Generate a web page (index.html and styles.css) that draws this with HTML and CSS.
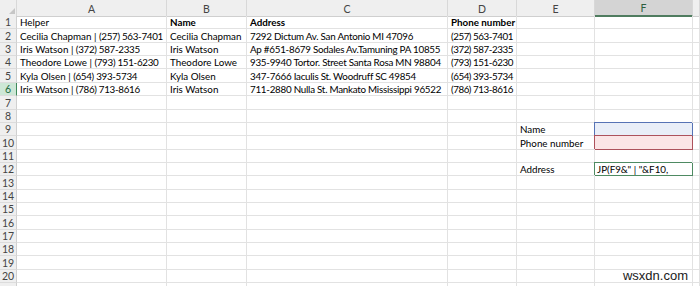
FILE: index.html
```html
<!DOCTYPE html>
<html>
<head>
<meta charset="utf-8">
<link rel="stylesheet" href="styles.css">
</head>
<body>
<div class="sheet">
  <div class="row head">
    <div class="corner"><svg width="17" height="16" viewBox="0 0 17 16"><polygon points="15,8 15,14 9,14" fill="#c6c6c6"/></svg></div>
    <div class="ch">A</div><div class="ch">B</div><div class="ch">C</div><div class="ch">D</div><div class="ch">E</div><div class="ch sel">F</div><div class="ch"></div>
  </div>
  <div class="row"><div class="rh">1</div><div class="c">Helper</div><div class="c b">Name</div><div class="c b">Address</div><div class="c b">Phone number</div><div class="c"></div><div class="c"></div><div class="c"></div></div>
  <div class="row"><div class="rh">2</div><div class="c">Cecilia Chapman | <span class="ph">(257) 563-7401</span></div><div class="c">Cecilia Chapman</div><div class="c ad">7292 Dictum Av. San Antonio MI 47096</div><div class="c"><span class="ph pd">(257) 563-7401</span></div><div class="c"></div><div class="c"></div><div class="c"></div></div>
  <div class="row"><div class="rh">3</div><div class="c">Iris Watson | <span class="ph">(372) 587-2335</span></div><div class="c">Iris Watson</div><div class="c ad">Ap #651-8679 Sodales Av.Tamuning PA 10855</div><div class="c"><span class="ph pd">(372) 587-2335</span></div><div class="c"></div><div class="c"></div><div class="c"></div></div>
  <div class="row"><div class="rh">4</div><div class="c">Theodore Lowe | <span class="ph">(793) 151-6230</span></div><div class="c">Theodore Lowe</div><div class="c ad">935-9940 Tortor. Street Santa Rosa MN 98804</div><div class="c"><span class="ph pd">(793) 151-6230</span></div><div class="c"></div><div class="c"></div><div class="c"></div></div>
  <div class="row"><div class="rh">5</div><div class="c">Kyla Olsen | <span class="ph">(654) 393-5734</span></div><div class="c">Kyla Olsen</div><div class="c ad">347-7666 Iaculis St. Woodruff SC 49854</div><div class="c"><span class="ph pd">(654) 393-5734</span></div><div class="c"></div><div class="c"></div><div class="c"></div></div>
  <div class="row"><div class="rh on">6</div><div class="c">Iris Watson | <span class="ph">(786) 713-8616</span></div><div class="c">Iris Watson</div><div class="c ad">711-2880 Nulla St. Mankato Mississippi 96522</div><div class="c"><span class="ph pd">(786) 713-8616</span></div><div class="c"></div><div class="c"></div><div class="c"></div></div>
  <div class="row"><div class="rh">7</div><div class="c"></div><div class="c"></div><div class="c"></div><div class="c"></div><div class="c"></div><div class="c"></div><div class="c"></div></div>
  <div class="row"><div class="rh">8</div><div class="c"></div><div class="c"></div><div class="c"></div><div class="c"></div><div class="c"></div><div class="c"></div><div class="c"></div></div>
  <div class="row"><div class="rh">9</div><div class="c"></div><div class="c"></div><div class="c"></div><div class="c"></div><div class="c">Name</div><div class="c fb"></div><div class="c"></div></div>
  <div class="row"><div class="rh">10</div><div class="c"></div><div class="c"></div><div class="c"></div><div class="c"></div><div class="c">Phone number</div><div class="c fr"></div><div class="c"></div></div>
  <div class="row"><div class="rh">11</div><div class="c"></div><div class="c"></div><div class="c"></div><div class="c"></div><div class="c"></div><div class="c"></div><div class="c"></div></div>
  <div class="row"><div class="rh">12</div><div class="c"></div><div class="c"></div><div class="c"></div><div class="c"></div><div class="c">Address</div><div class="c fg">JP(F9&amp;" | "&amp;F10,</div><div class="c"></div></div>
  <div class="row"><div class="rh">13</div><div class="c"></div><div class="c"></div><div class="c"></div><div class="c"></div><div class="c"></div><div class="c"></div><div class="c"></div></div>
  <div class="row"><div class="rh">14</div><div class="c"></div><div class="c"></div><div class="c"></div><div class="c"></div><div class="c"></div><div class="c"></div><div class="c"></div></div>
  <div class="row"><div class="rh">15</div><div class="c"></div><div class="c"></div><div class="c"></div><div class="c"></div><div class="c"></div><div class="c"></div><div class="c"></div></div>
  <div class="row"><div class="rh">16</div><div class="c"></div><div class="c"></div><div class="c"></div><div class="c"></div><div class="c"></div><div class="c"></div><div class="c"></div></div>
  <div class="row"><div class="rh">17</div><div class="c"></div><div class="c"></div><div class="c"></div><div class="c"></div><div class="c"></div><div class="c"></div><div class="c"></div></div>
  <div class="row"><div class="rh">18</div><div class="c"></div><div class="c"></div><div class="c"></div><div class="c"></div><div class="c"></div><div class="c"></div><div class="c"></div></div>
  <div class="row"><div class="rh">19</div><div class="c"></div><div class="c"></div><div class="c"></div><div class="c"></div><div class="c"></div><div class="c"></div><div class="c"></div></div>
  <div class="row"><div class="rh">20</div><div class="c"></div><div class="c"></div><div class="c"></div><div class="c"></div><div class="c"></div><div class="c"></div><div class="c"></div></div>
  <div class="row"><div class="rh"></div><div class="c"></div><div class="c"></div><div class="c"></div><div class="c"></div><div class="c"></div><div class="c"></div><div class="c"></div></div>
  <div class="watermark">wsxdn.com</div>
</div>
</body>
</html>
```

FILE: styles.css
```css
* { box-sizing: border-box; }
body { margin: 0; background: #fff; }
.sheet {
  position: relative;
  width: 700px;
  height: 286px;
  overflow: hidden;
  font-family: Lato, "Open Sans", sans-serif;
  font-size: 9.8px;
  color: #000;
}
.row {
  display: grid;
  grid-template-columns: 17px 150px 80px 201px 69px 78px 98px 7px;
  height: 13.36px;
}
.row.head { height: 16px; }
.corner {
  background: #efefef;
  border-right: 1px solid #d8d8d8;
  border-bottom: 1px solid #cfcfcf;
}
.corner svg { display: block; }
.ch {
  background: #efefef;
  border-right: 1px solid #d8d8d8;
  border-bottom: 1px solid #cfcfcf;
  color: #444;
  font-size: 10.5px;
  display: flex;
  align-items: center;
  justify-content: center;
  padding-top: 1px;
}
.ch.sel {
  background: #d4d4d4;
  color: #2c5e3e;
  border-bottom: 2px solid #4f7c5f;
}
.rh {
  background: #efefef;
  border-right: 1px solid #d0d0d0;
  border-bottom: 1px solid #dcdcdc;
  color: #444;
  font-size: 10.5px;
  display: flex;
  align-items: flex-end;
  justify-content: center;
  line-height: 12px;
}
.rh.on {
  background: #cde7d6;
  color: #1f6b3f;
  border-right: 1px solid #3f8a5b;
}
.c {
  border-right: 1px solid #e2e2e2;
  border-bottom: 1px solid #e2e2e2;
  padding-left: 3px;
  white-space: pre;
  overflow: hidden;
  line-height: 12px;
  display: flex;
  align-items: flex-end;
}
.ph { letter-spacing: -0.3px; }
.ph.pd { letter-spacing: -0.45px; }
.ad { letter-spacing: -0.25px; }
.b { font-weight: 700; }
.fb {
  background: #e9eef8;
  border-right-color: #5673b5;
  border-bottom-color: #5673b5;
  box-shadow: -1px -1px 0 #5673b5;
}
.fr {
  background: #fbe5e6;
  border-right-color: #ad525c;
  border-bottom-color: #ad525c;
  box-shadow: -1px -1px 0 #ad525c;
}
.fg {
  border-right-color: #4e8a62;
  border-bottom-color: #4e8a62;
  box-shadow: -1px -1px 0 #4e8a62;
  padding-left: 2px;
}
.watermark {
  position: absolute;
  right: 12px;
  bottom: 3px;
  font-family: "Liberation Sans", Arial, sans-serif;
  font-size: 13px;
  color: #1a1a1a;
}
```
